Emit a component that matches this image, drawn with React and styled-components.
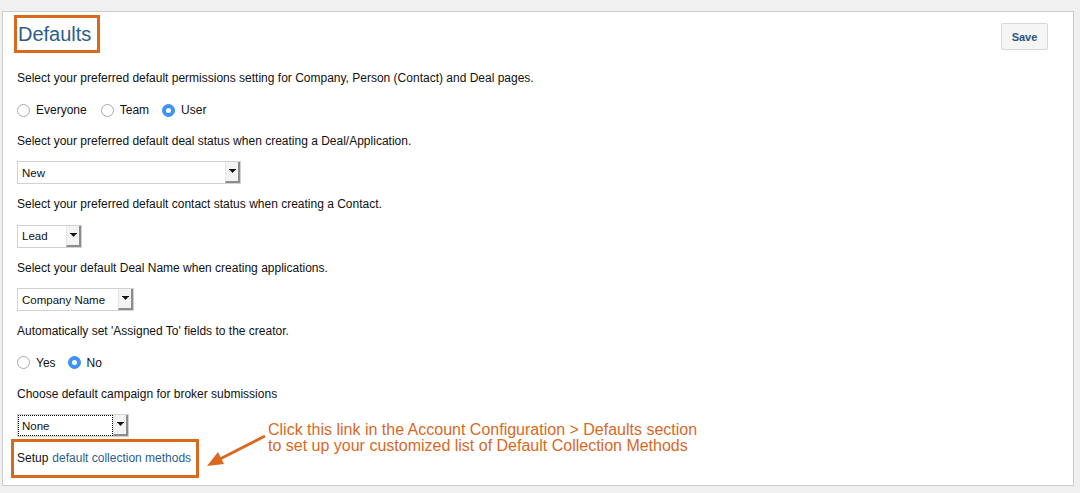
import React from "react";
import styled, { createGlobalStyle } from "styled-components";

const Global = createGlobalStyle`
  html, body { margin: 0; padding: 0; background: #f0f0f0; }
  body { font-family: "Liberation Sans", Arial, Helvetica, sans-serif; color: #111; }
  #root { height: 493px; display: flex; flex-direction: column; }
`;

const ORANGE = "#d8691f";

const Panel = styled.div`
  position: relative;
  margin: 11px 6px 7px 2px;
  flex: 1;
  background: #fff;
  border: 1px solid #cdcdcd;
  box-sizing: border-box;
  padding: 3px 25px 0 14px;
  display: flex;
  flex-direction: column;
`;

const Header = styled.div`
  display: flex;
  align-items: flex-start;
  justify-content: space-between;
  height: 38px;
  margin-bottom: 9px;
`;

const TitleBox = styled.div`
  border: 3px solid ${ORANGE};
  margin-left: -3px;
  width: 79px;
  height: 32px;
  padding-left: 1px;
  display: flex;
  align-items: center;
`;

const Title = styled.h1`
  margin: 0;
  font-size: 20px;
  font-weight: normal;
  color: #2d5d8b;
  line-height: 24px;
`;

const SaveButton = styled.button`
  margin-top: 8px;
  width: 47px;
  height: 27px;
  background: #f5f5f5;
  border: 1px solid #d8d8d8;
  border-radius: 2px;
  font-family: inherit;
  font-size: 11px;
  font-weight: bold;
  color: #2a5480;
  padding: 0;
`;

const Row = styled.div`
  height: 31.6px;
  display: flex;
  align-items: center;
  font-size: 12px;
  line-height: 16px;
  padding-top: ${(p) => p.$shift || 0}px;
  box-sizing: border-box;
`;

const RadioGroup = styled.div`
  display: flex;
  align-items: center;
`;

const RadioItem = styled.label`
  display: flex;
  align-items: center;
  margin-right: ${(p) => p.$gap}px;
  font-size: 12px;
`;

const RadioCircle = styled.span`
  width: 13px;
  height: 13px;
  border-radius: 50%;
  box-sizing: border-box;
  margin-right: 6px;
  display: flex;
  align-items: center;
  justify-content: center;
  background: ${(p) => (p.$on ? "#3b95f7" : "#fff")};
  border: 1px solid ${(p) => (p.$on ? "#3b8ff0" : "#a9a9a9")};
  &::after {
    content: "";
    display: ${(p) => (p.$on ? "block" : "none")};
    width: 5px;
    height: 5px;
    border-radius: 50%;
    background: #fff;
  }
`;

const SelectBox = styled.div`
  width: ${(p) => p.$w}px;
  height: 23px;
  box-sizing: border-box;
  border: 1px solid #d2d2d2;
  background: #fff;
  display: flex;
  align-items: stretch;
`;

const SelectText = styled.div`
  flex: 1;
  display: flex;
  align-items: center;
  padding-left: 4px;
  font-size: 11.5px;
  color: #111;
  ${(p) => p.$focus && `outline: 1px dotted #000; outline-offset: -1px;`}
`;

const SelectButton = styled.div`
  width: 15px;
  box-sizing: border-box;
  background: #f3f3f3;
  border-right: 2px solid #8c8c8c;
  border-bottom: 2px solid #8c8c8c;
  border-left: 1px solid #e6e6e6;
  display: flex;
  align-items: center;
  justify-content: center;
`;

const SetupBox = styled.div`
  border: 3px solid ${ORANGE};
  margin-left: -6px;
  margin-top: 3px;
  width: 179px;
  height: 33px;
  display: flex;
  align-items: center;
  padding-left: 3px;
  box-sizing: content-box;
  font-size: 12px;
`;

const Link = styled.a`
  color: #2b5e91;
  text-decoration: none;
  margin-left: 4px;
`;

const Annotation = styled.div`
  position: absolute;
  left: 265px;
  top: 410px;
  color: ${ORANGE};
  font-size: 16px;
  line-height: 16px;
`;

const Arrow = styled.svg`
  position: absolute;
  left: 195px;
  top: 405px;
  overflow: visible;
`;

function Select({ w, value, focus }) {
  return (
    <SelectBox $w={w}>
      <SelectText $focus={focus}>{value}</SelectText>
      <SelectButton>
        <svg width="7" height="5" viewBox="0 0 7 5">
          <path d="M0 0h7L3.5 4z" fill="#111" />
          <rect x="0" y="0" width="7" height="1" fill="#111" />
        </svg>
      </SelectButton>
    </SelectBox>
  );
}

function Radio({ label, on, gap }) {
  return (
    <RadioItem $gap={gap}>
      <RadioCircle $on={on} />
      {label}
    </RadioItem>
  );
}

export default function App() {
  return (
    <>
      <Global />
      <Panel>
        <Header>
          <TitleBox>
            <Title>Defaults</Title>
          </TitleBox>
          <SaveButton>Save</SaveButton>
        </Header>
        <Row>Select your preferred default permissions setting for Company, Person (Contact) and Deal pages.</Row>
        <Row $shift={2}>
          <RadioGroup>
            <Radio label="Everyone" gap={14} />
            <Radio label="Team" gap={13} />
            <Radio label="User" on gap={0} />
          </RadioGroup>
        </Row>
        <Row>Select your preferred default deal status when creating a Deal/Application.</Row>
        <Row>
          <Select w={224} value="New" />
        </Row>
        <Row>Select your preferred default contact status when creating a Contact.</Row>
        <Row $shift={1}>
          <Select w={65} value="Lead" />
        </Row>
        <Row $shift={1}>Select your default Deal Name when creating applications.</Row>
        <Row $shift={2}>
          <Select w={117} value="Company Name" />
        </Row>
        <Row>Automatically set 'Assigned To' fields to the creator.</Row>
        <Row $shift={1}>
          <RadioGroup>
            <Radio label="Yes" gap={12} />
            <Radio label="No" on gap={0} />
          </RadioGroup>
        </Row>
        <Row>Choose default campaign for broker submissions</Row>
        <Row $shift={1}>
          <Select w={112} value="None" focus />
        </Row>
        <Row>
          <SetupBox>
            Setup<Link href="#">default collection methods</Link>
          </SetupBox>
        </Row>
        <Annotation>
          Click this link in the Account Configuration &gt; Defaults section
          <br />
          to set up your customized list of Default Collection Methods
        </Annotation>
        <Arrow width="70" height="60" viewBox="0 0 70 60">
          <line x1="67" y1="19" x2="20" y2="43" stroke={ORANGE} strokeWidth="3" />
          <path d="M9 49 L20 35 L26 47 Z" fill={ORANGE} />
        </Arrow>
      </Panel>
    </>
  );
}
